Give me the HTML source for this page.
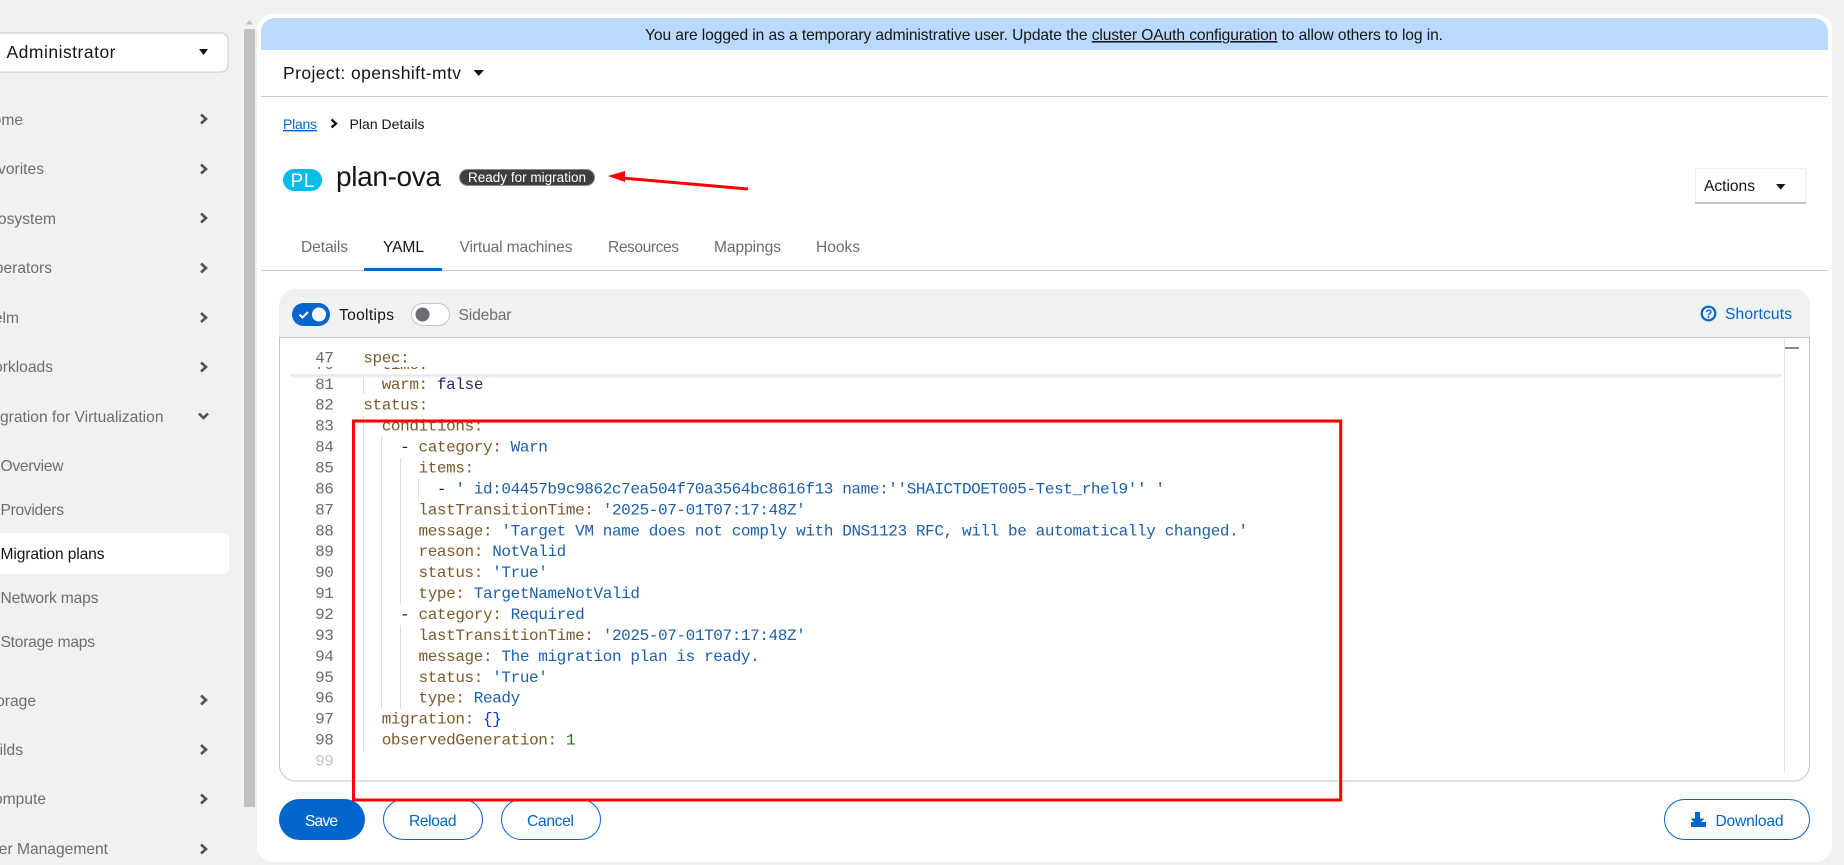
<!DOCTYPE html>
<html><head><meta charset="utf-8"><title>plan-ova</title>
<style>
html,body{margin:0;padding:0;width:1844px;height:865px;overflow:hidden;background:#f1f1f1}
svg{display:block}
text{font-family:"Liberation Sans",sans-serif}
.m{font-family:"Liberation Mono",monospace;font-size:16px;letter-spacing:-.39px;fill:#1b5fab}
.k{fill:#7b5b2c}
.d{fill:#222}
.n{font-family:"Liberation Mono",monospace;font-size:16px;letter-spacing:-.39px;fill:#6a6a6a;text-anchor:end}
.s{font-size:15.600px;fill:#6a6e73}
.e{text-anchor:end}
.c{fill:none;stroke:#4f5255;stroke-width:2.6}
.g{stroke:#dcdcdc;stroke-width:1}
</style></head><body>
<svg width="1844" height="865" viewBox="0 0 1844 865" xmlns="http://www.w3.org/2000/svg">
<rect width="1844" height="865" fill="#f1f1f1"/>
<!-- left nav -->
<rect x="-10" y="33" width="238" height="39" rx="7" fill="#fff" stroke="#c9c9c9"/>
<text x="6.500" y="58" font-size="17.500" fill="#151515" textLength="109">Administrator</text>
<polygon points="199,49 208,49 203.500,55" fill="#151515"/>
<text class="s e" x="23" y="125">Home</text>
<text class="s e" x="44" y="174">Favorites</text>
<text class="s e" x="56" y="224">Ecosystem</text>
<text class="s e" x="52" y="273">Operators</text>
<text class="s e" x="19" y="323">Helm</text>
<text class="s e" x="53" y="372">Workloads</text>
<text class="s e" x="163.500" y="422">Migration for Virtualization</text>
<text class="s" x="0.500" y="471" textLength="63">Overview</text>
<text class="s" x="0.500" y="515" textLength="63.500">Providers</text>
<rect x="-10" y="533" width="239" height="41" rx="6" fill="#fff"/>
<text class="s" x="0.500" y="559" style="fill:#151515" textLength="104">Migration plans</text>
<text class="s" x="0.500" y="603" textLength="98">Network maps</text>
<text class="s" x="0.500" y="647" textLength="94.500">Storage maps</text>
<text class="s e" x="36" y="706">Storage</text>
<text class="s e" x="23" y="755">Builds</text>
<text class="s e" x="46" y="804">Compute</text>
<text class="s e" x="108" y="854">User Management</text>
<g class="c">
<path d="M201 114.500l5 4.500-5 4.500"/><path d="M201 164.500l5 4.500-5 4.500"/><path d="M201 213.500l5 4.500-5 4.500"/><path d="M201 263.500l5 4.500-5 4.500"/><path d="M201 313l5 4.500-5 4.500"/><path d="M201 362.500l5 4.500-5 4.500"/>
<path d="M199 413.500l4.500 4.500 4.500-4.500"/>
<path d="M201 695.500l5 4.500-5 4.500"/><path d="M201 745l5 4.500-5 4.500"/><path d="M201 794.500l5 4.500-5 4.500"/><path d="M201 844.500l5 4.500-5 4.500"/>
</g>
<rect x="244" y="29" width="11" height="778" fill="#c1c1c1"/>
<polygon points="246,24.500 253,24.500 249.500,20" fill="#c1c1c1"/>
<!-- main card -->
<rect x="257" y="14" width="1575" height="848" rx="16" fill="#fff"/>
<path d="M261 50V32a14 14 0 0 1 14-14H1814a14 14 0 0 1 14 14V50Z" fill="#b9dafc"/>
<text x="645" y="40" font-size="15.600" fill="#151515" textLength="798">You are logged in as a temporary administrative user. Update the <tspan text-decoration="underline">cluster OAuth configuration</tspan> to allow others to log in.</text>
<text x="283" y="79" font-size="17.500" fill="#151515" textLength="178">Project: openshift-mtv</text>
<polygon points="473.500,70 484,70 478.700,76" fill="#151515"/>
<line x1="261" y1="96.500" x2="1828" y2="96.500" stroke="#cfcfcf"/>
<text x="283" y="129" font-size="14" fill="#06c" text-decoration="underline" textLength="34">Plans</text>
<path d="M331.500 119.500l4.500 4-4.500 4" fill="none" stroke="#151515" stroke-width="2.400"/>
<text x="349.500" y="129" font-size="14" fill="#151515" textLength="75">Plan Details</text>
<rect x="283" y="169" width="39" height="22" rx="11" fill="#06bde8"/>
<text x="290.500" y="187" font-size="19" fill="#fff" textLength="24">PL</text>
<text x="336" y="186" font-size="28" fill="#151515" textLength="105">plan-ova</text>
<rect x="459.500" y="169.500" width="135" height="16" rx="8" fill="#3c3f42" stroke="#8a8d90"/>
<text x="468" y="182" font-size="13.500" fill="#fff" textLength="118">Ready for migration</text>
<line x1="748" y1="189" x2="622" y2="178" stroke="#f00" stroke-width="3"/>
<polygon points="608,176 625,171 625,182" fill="#f00"/>
<rect x="1695.500" y="168.500" width="110" height="34" fill="#fff" stroke="#f0f0f0"/>
<line x1="1695" y1="203" x2="1806" y2="203" stroke="#8a8d90"/>
<text x="1704" y="191" font-size="15.600" fill="#151515" textLength="51">Actions</text>
<polygon points="1776,184 1785.500,184 1780.700,189.500" fill="#151515"/>
<!-- tabs -->
<g font-size="15.600">
<text x="301" y="252" fill="#6a6e73" textLength="47">Details</text>
<text x="383" y="252" fill="#151515" textLength="41">YAML</text>
<text x="459.500" y="252" fill="#6a6e73" textLength="113">Virtual machines</text>
<text x="608" y="252" fill="#6a6e73" textLength="71">Resources</text>
<text x="714" y="252" fill="#6a6e73" textLength="67">Mappings</text>
<text x="816" y="252" fill="#6a6e73" textLength="44">Hooks</text>
</g>
<line x1="261" y1="270.500" x2="1828" y2="270.500" stroke="#cfcfcf"/>
<rect x="364" y="268" width="78" height="3" fill="#06c"/>
<!-- editor -->
<path d="M279 337V305a16 16 0 0 1 16-16H1794a16 16 0 0 1 16 16V337Z" fill="#f1f1f1"/>
<path d="M279.500 337.500H1809.500V765a16 16 0 0 1-16 16H295.500a16 16 0 0 1-16-16Z" fill="#fff" stroke="#c6c6c6"/>
<rect x="292" y="303" width="38" height="23" rx="11.500" fill="#06c"/>
<circle cx="319" cy="314.500" r="7" fill="#fff"/>
<path d="M299.500 314.500l3 3 5.500-5.500" fill="none" stroke="#fff" stroke-width="2"/>
<text x="339" y="320" font-size="15.600" fill="#151515" textLength="55">Tooltips</text>
<rect x="411.500" y="303.500" width="38" height="22" rx="11" fill="#fff" stroke="#c6c6c6"/>
<circle cx="422.500" cy="314.500" r="7" fill="#6a6e73"/>
<text x="458.500" y="320" font-size="15.600" fill="#6a6e73" textLength="53">Sidebar</text>
<circle cx="1708.500" cy="313.500" r="6.800" fill="none" stroke="#06c" stroke-width="2.200"/>
<text x="1705.300" y="317.800" font-size="11.500" font-weight="bold" fill="#06c">?</text>
<text x="1725" y="319" font-size="15.600" fill="#06c" textLength="67">Shortcuts</text>
<line x1="1784.500" y1="338" x2="1784.500" y2="772" stroke="#e4e4e4"/>
<rect x="1785" y="347" width="14" height="2" fill="#8a8d90"/>
<!-- indent guides -->
<g class="g">
<line x1="363.500" y1="377" x2="363.500" y2="394"/>
<line x1="363.500" y1="416" x2="363.500" y2="751"/>
<line x1="381.500" y1="437" x2="381.500" y2="709"/>
<line x1="400.500" y1="458" x2="400.500" y2="604"/>
<line x1="400.500" y1="625" x2="400.500" y2="709"/>
<line x1="418.500" y1="479" x2="418.500" y2="500"/>
</g>
<!-- sticky -->
<defs>
<linearGradient id="sg" x1="0" y1="0" x2="0" y2="1"><stop offset="0" stop-color="#000" stop-opacity=".12"/><stop offset="1" stop-color="#000" stop-opacity="0"/></linearGradient>
<clipPath id="cl"><rect x="290" y="367" width="300" height="3"/></clipPath></defs>
<rect x="290" y="338" width="1492" height="36.500" fill="#fff"/>
<rect x="290" y="374.500" width="1492" height="4" fill="url(#sg)"/>
<text class="n" x="333.500" y="369" clip-path="url(#cl)">76</text>
<text class="m k" x="381.700" y="369" clip-path="url(#cl)">time:</text>
<text class="n" x="333.500" y="362.500">47</text>
<text class="m k" x="363.300" y="362.500">spec:</text>
<!-- code -->
<g transform="translate(0,-0.5)">
<text class="n" x="333.500" y="389.300">81</text>
<text class="n" x="333.500" y="410.200">82</text>
<text class="n" x="333.500" y="431.200">83</text>
<text class="n" x="333.500" y="452.100">84</text>
<text class="n" x="333.500" y="473">85</text>
<text class="n" x="333.500" y="493.900">86</text>
<text class="n" x="333.500" y="514.900">87</text>
<text class="n" x="333.500" y="535.800">88</text>
<text class="n" x="333.500" y="556.700">89</text>
<text class="n" x="333.500" y="577.700">90</text>
<text class="n" x="333.500" y="598.600">91</text>
<text class="n" x="333.500" y="619.500">92</text>
<text class="n" x="333.500" y="640.400">93</text>
<text class="n" x="333.500" y="661.400">94</text>
<text class="n" x="333.500" y="682.300">95</text>
<text class="n" x="333.500" y="703.200">96</text>
<text class="n" x="333.500" y="724.200">97</text>
<text class="n" x="333.500" y="745.100">98</text>
<text class="n" x="333.500" y="766" style="fill:#c4c4c4">99</text>
<text class="m" x="381.700" y="389.300"><tspan class="k">warm:</tspan> <tspan fill="#2a2470">false</tspan></text>
<text class="m k" x="363.300" y="410.200">status:</text>
<text class="m k" x="381.700" y="431.200">conditions:</text>
<text class="m" x="400.100" y="452.100"><tspan class="d">-</tspan> <tspan class="k">category:</tspan> Warn</text>
<text class="m k" x="418.500" y="473">items:</text>
<text class="m" x="436.900" y="493.900"><tspan class="d">-</tspan> ' id:04457b9c9862c7ea504f70a3564bc8616f13 name:''SHAICTDOET005-Test_rhel9'' '</text>
<text class="m" x="418.500" y="514.900"><tspan class="k">lastTransitionTime:</tspan> '2025-07-01T07:17:48Z'</text>
<text class="m" x="418.500" y="535.800"><tspan class="k">message:</tspan> 'Target VM name does not comply with DNS1123 RFC, will be automatically changed.'</text>
<text class="m" x="418.500" y="556.700"><tspan class="k">reason:</tspan> NotValid</text>
<text class="m" x="418.500" y="577.700"><tspan class="k">status:</tspan> 'True'</text>
<text class="m" x="418.500" y="598.600"><tspan class="k">type:</tspan> TargetNameNotValid</text>
<text class="m" x="400.100" y="619.500"><tspan class="d">-</tspan> <tspan class="k">category:</tspan> Required</text>
<text class="m" x="418.500" y="640.400"><tspan class="k">lastTransitionTime:</tspan> '2025-07-01T07:17:48Z'</text>
<text class="m" x="418.500" y="661.400"><tspan class="k">message:</tspan> The migration plan is ready.</text>
<text class="m" x="418.500" y="682.300"><tspan class="k">status:</tspan> 'True'</text>
<text class="m" x="418.500" y="703.200"><tspan class="k">type:</tspan> Ready</text>
<text class="m" x="381.700" y="724.200"><tspan class="k">migration:</tspan> <tspan fill="#0431fa">{}</tspan></text>
<text class="m" x="381.700" y="745.100"><tspan class="k">observedGeneration:</tspan> <tspan fill="#2f6b1e">1</tspan></text>
</g>
<!-- buttons -->
<rect x="279" y="799" width="86" height="41" rx="20.500" fill="#06c"/>
<text x="305" y="826" font-size="15.600" fill="#fff" textLength="33">Save</text>
<rect x="383.500" y="799.500" width="99" height="40" rx="20" fill="#fff" stroke="#06c"/>
<text x="409" y="826" font-size="15.600" fill="#06c" textLength="47.500">Reload</text>
<rect x="501.500" y="799.500" width="99" height="40" rx="20" fill="#fff" stroke="#06c"/>
<text x="527" y="826" font-size="15.600" fill="#06c" textLength="47">Cancel</text>
<rect x="1664.500" y="799.500" width="145" height="40" rx="20" fill="#fff" stroke="#06c"/>
<path d="M1695 812h5v6.500h4.500l-7 7-7-7h4.500Z" fill="#06c"/>
<path d="M1691 822h3.500l3 3 3-3h5.500v5h-15Z" fill="#06c"/>
<text x="1715.500" y="826" font-size="15.600" fill="#06c" textLength="68">Download</text>
<!-- red box -->
<rect x="353.500" y="421" width="987.200" height="379" fill="none" stroke="#f00" stroke-width="3"/>
</svg>
</body></html>
